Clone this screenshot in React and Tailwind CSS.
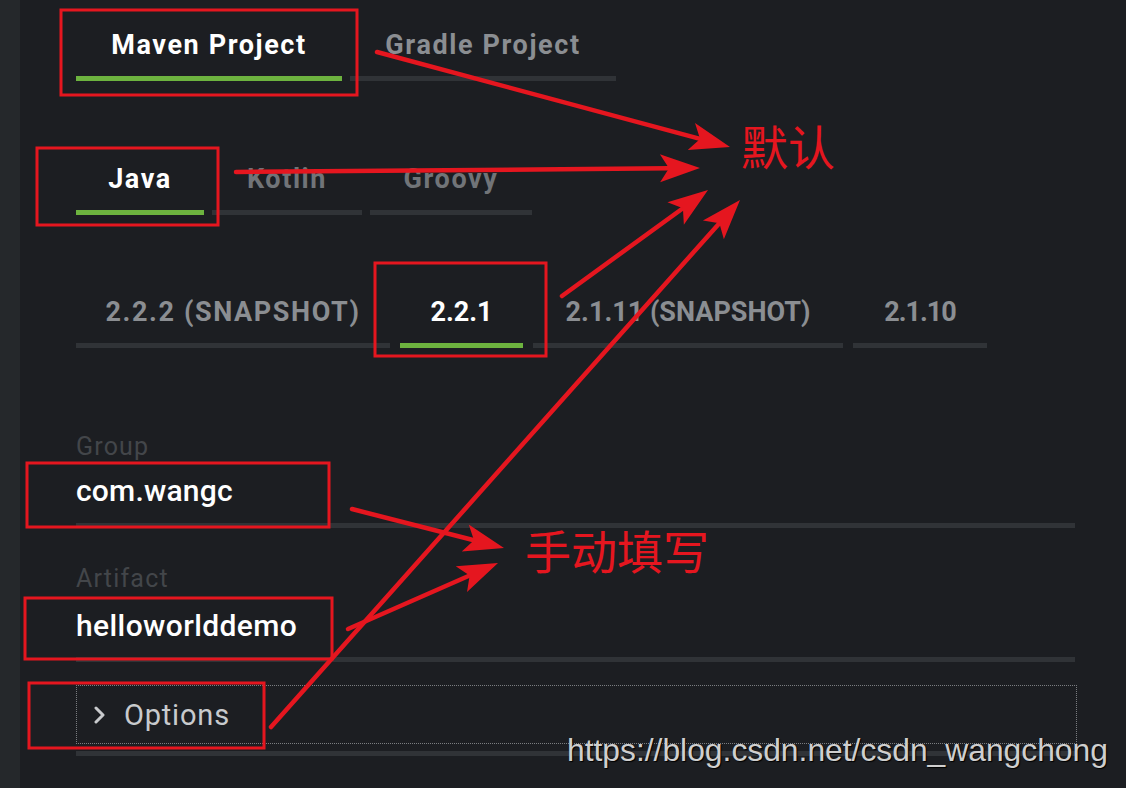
import React from 'react';

const RED = '#e5161f';

const ROW1 = [
  { label: 'Maven Project', active: true, w: 'w-[266px]' },
  { label: 'Gradle Project', active: false, w: 'w-[266px]' },
];

const ROW2 = [
  { label: 'Java', active: true, w: 'w-[128px]' },
  { label: 'Kotlin', active: false, w: 'w-[150px]', dim: true },
  { label: 'Groovy', active: false, w: 'w-[162px]', dim: true },
];

// digits with lots of "1" run narrow in the original font
const ROW3 = [
  { label: '2.2.2 (SNAPSHOT)', active: false, w: 'w-[314px]' },
  { label: '2.2.1', active: true, w: 'w-[123px]', tr: 'tracking-[0px]' },
  { label: '2.1.11 (SNAPSHOT)', active: false, w: 'w-[310px]', tr: 'tracking-[0px]' },
  { label: '2.1.10', active: false, w: 'w-[134px]', tr: 'tracking-[-1px]' },
];

const BOXES = [
  [61, 10, 357, 95],
  [37, 148, 218, 225],
  [375, 263, 546, 356],
  [27, 463, 329, 527],
  [25, 598, 332, 659],
  [29, 683, 264, 748],
];

const ARROWS = [
  [377, 52, 730, 147],
  [236, 172, 700, 168],
  [562, 296, 708, 190],
  [271, 727, 740, 200],
  [352, 509, 504, 548],
  [348, 629, 498, 563],
];

function Tab({ label, active, w, dim, tr = 'tracking-[1.6px]' }) {
  return (
    <div className={`flex flex-col ${w}`}>
      <span
        className={`block text-center leading-[38px] text-[27px] font-bold ${tr} ${
          active ? 'text-white' : dim ? 'text-[#717478]' : 'text-[#8b8e92]'
        }`}
      >
        {label}
      </span>
      <div className={`mt-[12px] h-[5px] ${active ? 'bg-[#6db33f]' : 'bg-[#303337]'}`} />
    </div>
  );
}

function Arrow({ x1, y1, x2, y2 }) {
  const dx = x2 - x1;
  const dy = y2 - y1;
  const len = Math.hypot(dx, dy);
  const ux = dx / len;
  const uy = dy / len;
  const px = -uy;
  const py = ux;
  const L = 40;
  const H = 14;
  const N = 31;
  const bx = x2 - ux * L;
  const by = y2 - uy * L;
  const nx = x2 - ux * N;
  const ny = y2 - uy * N;
  const pts = [
    [x2, y2],
    [bx + px * H, by + py * H],
    [nx, ny],
    [bx - px * H, by - py * H],
  ]
    .map((p) => p.join(','))
    .join(' ');
  return (
    <g>
      <line x1={x1} y1={y1} x2={nx} y2={ny} stroke={RED} strokeWidth="4.5" strokeLinecap="round" />
      <polygon points={pts} fill={RED} />
    </g>
  );
}

export default function App() {
  return (
    <div
      className="relative flex w-[1126px] h-[788px] overflow-hidden bg-[#1c1e22]"
      style={{ fontFamily: 'Roboto, "Noto Sans", sans-serif' }}
    >
      {/* left rail */}
      <div className="w-[20px] shrink-0 bg-[#25282b]" />

      {/* form column */}
      <div className="flex flex-col pl-[56px] pt-[26px]">
        <div className="flex gap-[8px]">
          {ROW1.map((t) => (
            <Tab key={t.label} {...t} />
          ))}
        </div>

        <div className="flex gap-[8px] mt-[79px]">
          {ROW2.map((t) => (
            <Tab key={t.label} {...t} />
          ))}
        </div>

        <div className="flex gap-[10px] mt-[78px]">
          {ROW3.map((t) => (
            <Tab key={t.label} {...t} />
          ))}
        </div>

        {/* Group */}
        <div className="mt-[85px] text-[25px] leading-[28px] tracking-[1.2px] text-[#43464a]">Group</div>
        <div className="mt-[12px] w-[999px] text-[30px] leading-[36px] font-medium tracking-[0.2px] text-white">com.wangc</div>
        <div className="mt-[14px] w-[999px] h-[5px] bg-[#303337]" />

        {/* Artifact */}
        <div className="mt-[37px] text-[25px] leading-[28px] tracking-[1.2px] text-[#43464a]">Artifact</div>
        <div className="mt-[15px] w-[999px] text-[30px] leading-[36px] font-medium tracking-[0.4px] text-white">helloworlddemo</div>
        <div className="mt-[13px] w-[999px] h-[5px] bg-[#303337]" />

        {/* Options */}
        <div className="mt-[23px] w-[1001px] h-[59px] border border-dotted border-[#7a7d81] flex items-center pl-[15px] gap-[16px] text-[#c8cacd]">
          <svg width="16" height="18" viewBox="0 0 16 18" fill="none">
            <path d="M4 2 L11 9 L4 16" stroke="#c8cacd" strokeWidth="3" strokeLinecap="round" strokeLinejoin="round" />
          </svg>
          <span className="text-[29px] leading-[34px] tracking-[0.8px]">Options</span>
        </div>
        <div className="mt-[7px] w-[999px] h-[5px] bg-[#303337]" />
      </div>

      {/* annotations */}
      <svg className="absolute inset-0 pointer-events-none" width="1126" height="788" viewBox="0 0 1126 788">
        {BOXES.map(([x1, y1, x2, y2], i) => (
          <rect key={i} x={x1} y={y1} width={x2 - x1} height={y2 - y1} fill="none" stroke={RED} strokeWidth="3" />
        ))}
        {ARROWS.map(([x1, y1, x2, y2], i) => (
          <Arrow key={i} x1={x1} y1={y1} x2={x2} y2={y2} />
        ))}
      </svg>

      <div
        className="absolute left-[741px] top-[115px] text-[47px] leading-[60px] text-[#e5161f]"
        style={{ fontFamily: '"Noto Sans CJK SC", sans-serif' }}
      >
        默认
      </div>
      <div
        className="absolute left-[525px] top-[519px] text-[46px] leading-[60px] text-[#e5161f]"
        style={{ fontFamily: '"Noto Sans CJK SC", sans-serif' }}
      >
        手动填写
      </div>

      <div
        className="absolute left-[567px] top-[730px] text-[31.8px] leading-[40px] text-[#cfcfcf] [text-shadow:1px_1px_1px_#000]"
        style={{ fontFamily: '"Liberation Sans", Arial, sans-serif' }}
      >
        https://blog.csdn.net/csdn_wangchong
      </div>
    </div>
  );
}
